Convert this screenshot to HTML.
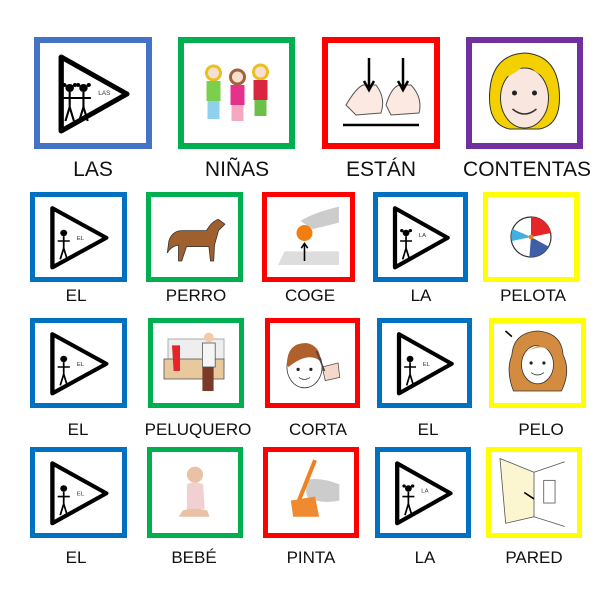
<!DOCTYPE html>
<html><head><meta charset="utf-8"><style>
body{margin:0;width:613px;height:598px;background:#fff;position:relative;overflow:hidden;font-family:"Liberation Sans",sans-serif}
.b{position:absolute;box-sizing:border-box;background:#fff}
.b svg{position:absolute;left:0;top:0;width:100%;height:100%}
.t{position:absolute;text-align:center;color:#111;white-space:nowrap;transform:translateX(-50%)}
.r1{font-size:21px}.r{font-size:17px}
</style></head><body>
<svg width="0" height="0" style="position:absolute">
<defs>
<g id="tri"><path d="M20 14 L20 88 L82 51 Z" fill="none" stroke="#000" stroke-width="5" stroke-linejoin="round"/></g>
<g id="man"><circle cx="33" cy="45" r="4" fill="#000"/><path d="M33 49 V64 M33 64 L29 78 M33 64 L37 78 M26 55 H40" stroke="#000" stroke-width="2" fill="none"/></g>
<g id="girl"><circle cx="33" cy="45" r="4" fill="#000"/><circle cx="28" cy="42" r="2" fill="#000"/><circle cx="38" cy="42" r="2" fill="#000"/><path d="M33 49 V64 M33 64 L29 78 M33 64 L37 78 M26 55 H40" stroke="#000" stroke-width="2" fill="none"/></g>
</defs></svg>

<!-- Row 1 -->
<div class="b" style="left:34px;top:37px;width:118px;height:112px;border:6px solid #4472C4"><svg viewBox="0 0 100 100" preserveAspectRatio="none"><use href="#tri"/><g transform="translate(-5,0)"><use href="#girl"/></g><g transform="translate(8,0)"><use href="#girl"/></g><text x="55" y="52" font-size="6" fill="#333">LAS</text></svg></div>
<div class="b" style="left:178px;top:37px;width:117px;height:112px;border:6px solid #00B050"><svg viewBox="0 0 100 100">
<g><circle cx="27" cy="30" r="7" fill="#f6dfcf" stroke="#e8c020" stroke-width="3"/><rect x="20" y="38" width="14" height="20" fill="#7ccf4e"/><rect x="21" y="58" width="12" height="18" fill="#8fd0ee"/></g>
<g><circle cx="51" cy="34" r="7" fill="#f6dfcf" stroke="#a5603a" stroke-width="3"/><rect x="44" y="42" width="14" height="20" fill="#e6318c"/><rect x="45" y="62" width="12" height="16" fill="#f6a8c2"/></g>
<g><circle cx="74" cy="29" r="7" fill="#f6dfcf" stroke="#e8c020" stroke-width="3"/><rect x="67" y="37" width="14" height="20" fill="#d7263d"/><rect x="68" y="57" width="12" height="16" fill="#6cc04a"/></g></svg></div>
<div class="b" style="left:322px;top:37px;width:118px;height:112px;border:6px solid #FF0000"><svg viewBox="0 0 100 100">
<path d="M15 62 Q25 45 32 42 L45 42 Q55 55 50 70 L25 72 Z" fill="#fbe9e2" stroke="#555" stroke-width="1"/>
<path d="M55 62 Q60 45 68 42 L80 42 Q92 55 88 70 L60 72 Z" fill="#fbe9e2" stroke="#555" stroke-width="1"/>
<path d="M38 15 V45 M33 38 L38 47 L43 38 M72 15 V45 M67 38 L72 47 L77 38" stroke="#000" stroke-width="2.5" fill="none"/>
<path d="M12 82 H88" stroke="#000" stroke-width="2.5"/></svg></div>
<div class="b" style="left:466px;top:37px;width:117px;height:112px;border:6px solid #7030A0"><svg viewBox="0 0 100 100">
<path d="M50 10 Q15 12 15 55 Q15 82 35 86 L65 86 Q85 82 85 55 Q85 12 50 10Z" fill="#f5d000" stroke="#333" stroke-width="1"/>
<ellipse cx="50" cy="55" rx="24" ry="30" fill="#f9e6de" stroke="#333" stroke-width="1"/>
<path d="M28 35 Q45 30 52 18 Q58 30 74 35 Q70 18 50 16 Q30 18 28 35Z" fill="#f5d000"/>
<circle cx="40" cy="50" r="2.5" fill="#222"/><circle cx="60" cy="50" r="2.5" fill="#222"/>
<path d="M38 66 Q50 76 62 66" stroke="#333" stroke-width="1.5" fill="none"/></svg></div>
<div class="t r1" style="left:93px;top:158px">LAS</div>
<div class="t r1" style="left:237px;top:158px">NIÑAS</div>
<div class="t r1" style="left:381px;top:158px">ESTÁN</div>
<div class="t r1" style="left:527px;top:158px">CONTENTAS</div>

<!-- Row 2 -->
<div class="b" style="left:30px;top:192px;width:97px;height:90px;border:5px solid #0070C0"><svg viewBox="0 0 100 100" preserveAspectRatio="none"><use href="#tri"/><use href="#man"/><text x="48" y="54" font-size="7" fill="#333">EL</text></svg></div>
<div class="b" style="left:146px;top:192px;width:97px;height:90px;border:5px solid #00B050"><svg viewBox="0 0 100 100"><path d="M18 55 Q22 42 35 42 L65 42 Q72 30 80 28 L88 34 L80 42 L75 60 L74 80 L70 80 L68 62 L40 62 L34 80 L30 80 L30 60 Q20 62 16 70Z" fill="#a0602e" stroke="#333" stroke-width="1"/></svg></div>
<div class="b" style="left:262px;top:192px;width:93px;height:90px;border:5px solid #FF0000"><svg viewBox="0 0 100 100"><path d="M12 85 L20 68 L88 68 L88 85Z" fill="#ddd"/><path d="M40 30 Q55 20 88 12 L88 32 Q65 38 55 40Z" fill="#ccc"/><circle cx="45" cy="45" r="10" fill="#f07f10"/><path d="M45 80 V60 M41 64 L45 58 L49 64" stroke="#000" stroke-width="2" fill="none"/></svg></div>
<div class="b" style="left:373px;top:192px;width:95px;height:90px;border:5px solid #0070C0"><svg viewBox="0 0 100 100" preserveAspectRatio="none"><use href="#tri"/><use href="#girl"/><text x="48" y="50" font-size="7" fill="#333">LA</text></svg></div>
<div class="b" style="left:483px;top:192px;width:96px;height:90px;border:5px solid #FFFF00"><svg viewBox="0 0 100 100"><circle cx="50" cy="50" r="25" fill="#fff" stroke="#333" stroke-width="1.5"/><path d="M50 50 L50 25 A25 25 0 0 1 75 45Z" fill="#e52528"/><path d="M50 50 L72 62 A25 25 0 0 1 48 75Z" fill="#3f5ea8"/><path d="M50 50 L27 40 A25 25 0 0 0 26 55Z" fill="#3fb0e0"/><circle cx="50" cy="50" r="3" fill="#f08020"/></svg></div>
<div class="t r" style="left:76px;top:286px">EL</div>
<div class="t r" style="left:196px;top:286px">PERRO</div>
<div class="t r" style="left:310px;top:286px">COGE</div>
<div class="t r" style="left:421px;top:286px">LA</div>
<div class="t r" style="left:533px;top:286px">PELOTA</div>

<!-- Row 3 -->
<div class="b" style="left:30px;top:318px;width:97px;height:90px;border:5px solid #0070C0"><svg viewBox="0 0 100 100" preserveAspectRatio="none"><use href="#tri"/><use href="#man"/><text x="48" y="54" font-size="7" fill="#333">EL</text></svg></div>
<div class="b" style="left:148px;top:318px;width:96px;height:90px;border:5px solid #00B050"><svg viewBox="0 0 100 100"><rect x="15" y="20" width="70" height="35" fill="#eee" stroke="#999"/><rect x="10" y="45" width="75" height="25" fill="#e7c99d" stroke="#555"/><path d="M20 28 L30 28 L30 60 L22 60Z" fill="#e52528"/><rect x="58" y="25" width="16" height="30" fill="#f5f5f5" stroke="#555"/><circle cx="66" cy="18" r="6" fill="#f3c9a8"/><rect x="58" y="55" width="14" height="30" fill="#7a3a28"/></svg></div>
<div class="b" style="left:265px;top:318px;width:95px;height:90px;border:5px solid #FF0000"><svg viewBox="0 0 100 100"><ellipse cx="40" cy="55" rx="22" ry="26" fill="#fff" stroke="#333"/><path d="M18 52 Q18 25 42 25 Q60 28 60 48 Q45 35 20 55Z" fill="#b0602a"/><circle cx="32" cy="58" r="2" fill="#222"/><circle cx="48" cy="58" r="2" fill="#222"/><path d="M33 68 Q40 73 47 68" stroke="#333" fill="none"/><path d="M62 55 L82 50 L84 68 L66 72Z" fill="#f5d8c8" stroke="#555"/><path d="M55 35 L65 60" stroke="#444" stroke-width="2"/></svg></div>
<div class="b" style="left:377px;top:318px;width:95px;height:90px;border:5px solid #0070C0"><svg viewBox="0 0 100 100" preserveAspectRatio="none"><use href="#tri"/><use href="#man"/><text x="48" y="54" font-size="7" fill="#333">EL</text></svg></div>
<div class="b" style="left:489px;top:318px;width:97px;height:90px;border:5px solid #FFFF00"><svg viewBox="0 0 100 100"><path d="M50 10 Q20 12 18 40 Q10 60 20 85 L80 85 Q92 60 82 40 Q80 12 50 10Z" fill="#d28b3f" stroke="#333" stroke-width="1"/><ellipse cx="50" cy="52" rx="20" ry="24" fill="#fff" stroke="#333"/><path d="M30 40 Q45 30 60 25 Q70 35 70 42 Q60 20 30 40Z" fill="#d28b3f"/><circle cx="42" cy="50" r="2" fill="#222"/><circle cx="58" cy="50" r="2" fill="#222"/><path d="M42 62 Q50 68 58 62" stroke="#333" fill="none"/><path d="M10 10 L18 17" stroke="#000" stroke-width="2"/></svg></div>
<div class="t r" style="left:78px;top:420px">EL</div>
<div class="t r" style="left:198px;top:420px">PELUQUERO</div>
<div class="t r" style="left:318px;top:420px">CORTA</div>
<div class="t r" style="left:428px;top:420px">EL</div>
<div class="t r" style="left:541px;top:420px">PELO</div>

<!-- Row 4 -->
<div class="b" style="left:30px;top:447px;width:97px;height:91px;border:5px solid #0070C0"><svg viewBox="0 0 100 100" preserveAspectRatio="none"><use href="#tri"/><use href="#man"/><text x="48" y="54" font-size="7" fill="#333">EL</text></svg></div>
<div class="b" style="left:147px;top:447px;width:96px;height:91px;border:5px solid #00B050"><svg viewBox="0 0 100 100"><circle cx="50" cy="28" r="10" fill="#e9c2a6"/><path d="M40 40 Q50 35 60 40 L62 70 L40 72Z" fill="#f0d0d0"/><path d="M35 72 Q50 68 65 72 L68 80 L30 80Z" fill="#e9c2a6"/></svg></div>
<div class="b" style="left:263px;top:447px;width:96px;height:91px;border:5px solid #FF0000"><svg viewBox="0 0 100 100"><path d="M42 35 Q60 30 85 40 L85 60 Q60 65 45 55Z" fill="#ccc"/><path d="M55 10 L35 60" stroke="#f08020" stroke-width="5"/><path d="M25 60 L55 55 L60 80 L28 80Z" fill="#f08a30"/></svg></div>
<div class="b" style="left:375px;top:447px;width:96px;height:91px;border:5px solid #0070C0"><svg viewBox="0 0 100 100" preserveAspectRatio="none"><use href="#tri"/><use href="#girl"/><text x="48" y="50" font-size="7" fill="#333">LA</text></svg></div>
<div class="b" style="left:486px;top:447px;width:96px;height:91px;border:5px solid #FFFF00"><svg viewBox="0 0 100 100"><path d="M8 8 L50 25 L50 80 L15 88Z" fill="#fbf6d0" stroke="#555"/><path d="M50 25 L88 12 M50 80 L88 92" stroke="#555" fill="none"/><rect x="62" y="35" width="14" height="28" fill="none" stroke="#555"/><path d="M38 50 L50 58" stroke="#000" stroke-width="2"/></svg></div>
<div class="t r" style="left:76px;top:548px">EL</div>
<div class="t r" style="left:194px;top:548px">BEBÉ</div>
<div class="t r" style="left:311px;top:548px">PINTA</div>
<div class="t r" style="left:425px;top:548px">LA</div>
<div class="t r" style="left:534px;top:548px">PARED</div>
</body></html>
